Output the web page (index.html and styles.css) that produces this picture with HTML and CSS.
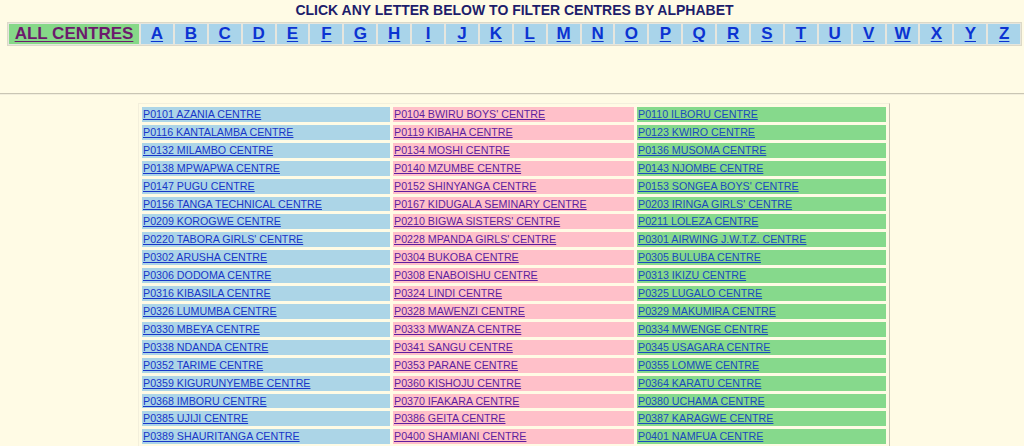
FILE: index.html
```
<!DOCTYPE html>
<html lang="en">
<head>
    <meta charset="UTF-8">
    <meta name="viewport" content="width=device-width, initial-scale=1.0">
    <title>Centres</title>
    <link rel="stylesheet" href="styles.css">
</head>
<body>

    <h3 class="filter-title">CLICK ANY LETTER BELOW TO FILTER CENTRES BY ALPHABET</h3>

    <div class="letter-bar">
        <a class="letter all" href="#">ALL CENTRES</a>
        <a class="letter" href="#">A</a>
        <a class="letter" href="#">B</a>
        <a class="letter" href="#">C</a>
        <a class="letter" href="#">D</a>
        <a class="letter" href="#">E</a>
        <a class="letter" href="#">F</a>
        <a class="letter" href="#">G</a>
        <a class="letter" href="#">H</a>
        <a class="letter" href="#">I</a>
        <a class="letter" href="#">J</a>
        <a class="letter" href="#">K</a>
        <a class="letter" href="#">L</a>
        <a class="letter" href="#">M</a>
        <a class="letter" href="#">N</a>
        <a class="letter" href="#">O</a>
        <a class="letter" href="#">P</a>
        <a class="letter" href="#">Q</a>
        <a class="letter" href="#">R</a>
        <a class="letter" href="#">S</a>
        <a class="letter" href="#">T</a>
        <a class="letter" href="#">U</a>
        <a class="letter" href="#">V</a>
        <a class="letter" href="#">W</a>
        <a class="letter" href="#">X</a>
        <a class="letter" href="#">Y</a>
        <a class="letter" href="#">Z</a>
    </div>

    <hr class="divider">

    <table class="centres">
        <tr><td class="c1"><a href="#">P0101 AZANIA CENTRE</a></td><td class="c2"><a href="#">P0104 BWIRU BOYS' CENTRE</a></td><td class="c3"><a href="#">P0110 ILBORU CENTRE</a></td></tr>
        <tr><td class="c1"><a href="#">P0116 KANTALAMBA CENTRE</a></td><td class="c2"><a href="#">P0119 KIBAHA CENTRE</a></td><td class="c3"><a href="#">P0123 KWIRO CENTRE</a></td></tr>
        <tr><td class="c1"><a href="#">P0132 MILAMBO CENTRE</a></td><td class="c2"><a href="#">P0134 MOSHI CENTRE</a></td><td class="c3"><a href="#">P0136 MUSOMA CENTRE</a></td></tr>
        <tr><td class="c1"><a href="#">P0138 MPWAPWA CENTRE</a></td><td class="c2"><a href="#">P0140 MZUMBE CENTRE</a></td><td class="c3"><a href="#">P0143 NJOMBE CENTRE</a></td></tr>
        <tr><td class="c1"><a href="#">P0147 PUGU CENTRE</a></td><td class="c2"><a href="#">P0152 SHINYANGA CENTRE</a></td><td class="c3"><a href="#">P0153 SONGEA BOYS' CENTRE</a></td></tr>
        <tr><td class="c1"><a href="#">P0156 TANGA TECHNICAL CENTRE</a></td><td class="c2"><a href="#">P0167 KIDUGALA SEMINARY CENTRE</a></td><td class="c3"><a href="#">P0203 IRINGA GIRLS' CENTRE</a></td></tr>
        <tr><td class="c1"><a href="#">P0209 KOROGWE CENTRE</a></td><td class="c2"><a href="#">P0210 BIGWA SISTERS' CENTRE</a></td><td class="c3"><a href="#">P0211 LOLEZA CENTRE</a></td></tr>
        <tr><td class="c1"><a href="#">P0220 TABORA GIRLS' CENTRE</a></td><td class="c2"><a href="#">P0228 MPANDA GIRLS' CENTRE</a></td><td class="c3"><a href="#">P0301 AIRWING J.W.T.Z. CENTRE</a></td></tr>
        <tr><td class="c1"><a href="#">P0302 ARUSHA CENTRE</a></td><td class="c2"><a href="#">P0304 BUKOBA CENTRE</a></td><td class="c3"><a href="#">P0305 BULUBA CENTRE</a></td></tr>
        <tr><td class="c1"><a href="#">P0306 DODOMA CENTRE</a></td><td class="c2"><a href="#">P0308 ENABOISHU CENTRE</a></td><td class="c3"><a href="#">P0313 IKIZU CENTRE</a></td></tr>
        <tr><td class="c1"><a href="#">P0316 KIBASILA CENTRE</a></td><td class="c2"><a href="#">P0324 LINDI CENTRE</a></td><td class="c3"><a href="#">P0325 LUGALO CENTRE</a></td></tr>
        <tr><td class="c1"><a href="#">P0326 LUMUMBA CENTRE</a></td><td class="c2"><a href="#">P0328 MAWENZI CENTRE</a></td><td class="c3"><a href="#">P0329 MAKUMIRA CENTRE</a></td></tr>
        <tr><td class="c1"><a href="#">P0330 MBEYA CENTRE</a></td><td class="c2"><a href="#">P0333 MWANZA CENTRE</a></td><td class="c3"><a href="#">P0334 MWENGE CENTRE</a></td></tr>
        <tr><td class="c1"><a href="#">P0338 NDANDA CENTRE</a></td><td class="c2"><a href="#">P0341 SANGU CENTRE</a></td><td class="c3"><a href="#">P0345 USAGARA CENTRE</a></td></tr>
        <tr><td class="c1"><a href="#">P0352 TARIME CENTRE</a></td><td class="c2"><a href="#">P0353 PARANE CENTRE</a></td><td class="c3"><a href="#">P0355 LOMWE CENTRE</a></td></tr>
        <tr><td class="c1"><a href="#">P0359 KIGURUNYEMBE CENTRE</a></td><td class="c2"><a href="#">P0360 KISHOJU CENTRE</a></td><td class="c3"><a href="#">P0364 KARATU CENTRE</a></td></tr>
        <tr><td class="c1"><a href="#">P0368 IMBORU CENTRE</a></td><td class="c2"><a href="#">P0370 IFAKARA CENTRE</a></td><td class="c3"><a href="#">P0380 UCHAMA CENTRE</a></td></tr>
        <tr><td class="c1"><a href="#">P0385 UJIJI CENTRE</a></td><td class="c2"><a href="#">P0386 GEITA CENTRE</a></td><td class="c3"><a href="#">P0387 KARAGWE CENTRE</a></td></tr>
        <tr><td class="c1"><a href="#">P0389 SHAURITANGA CENTRE</a></td><td class="c2"><a href="#">P0400 SHAMIANI CENTRE</a></td><td class="c3"><a href="#">P0401 NAMFUA CENTRE</a></td></tr>
    </table>

</body>
</html>
```

FILE: styles.css
```
body {
    font-family: "Liberation Sans", Arial, sans-serif;
    margin: 0;
    background-color: #fffbe5;
}
.filter-title {
    margin: 2px 0 0 5px;
    font-size: 14px;
    line-height: 17px;
    font-weight: bold;
    color: #1d1d6b;
    text-align: center;
}
.letter-bar {
    display: flex;
    gap: 2px;
    height: 24px;
    margin: 3px 2px 0 7px;
    padding: 1px;
    border: 1px solid #dcd9c8;
    background-color: #e6e6de;
    box-sizing: border-box;
}
.letter {
    flex: 1;
    display: flex;
    align-items: center;
    justify-content: center;
    background-color: #a9d4ea;
    color: #0b33d2;
    font-size: 17px;
    font-weight: bold;
    text-underline-offset: 2px;
}
.letter.all {
    flex: 0 0 130px;
    background-color: #86d888;
    color: #6c1a6c;
}
.divider {
    margin: 47px 0 0 0;
    border: none;
    border-top: 1px solid #c9c5b4;
    border-bottom: 1px solid #f2eedc;
}
.centres {
    margin: 8px auto 0 auto;
    position: relative;
    left: 2px;
    border-collapse: separate;
    border-spacing: 3px;
    border: 1px solid;
    border-color: #f3efdc #c6c2b0 #c6c2b0 #f3efdc;
    font-size: 10.7px;
}
.centres td {
    height: 14.9px;
    padding: 0 0 0 1px;
    line-height: 14.9px;
    white-space: nowrap;
}
.centres .c1 {
    width: 247px;
    background-color: #acd5e7;
}
.centres .c2 {
    width: 240px;
    background-color: #ffc0c9;
}
.centres .c3 {
    width: 248px;
    background-color: #86d98c;
}
.c1 a {
    color: #1836c8;
}
.c2 a {
    color: #5e1d9e;
}
.c3 a {
    color: #1a4bbd;
}
```
